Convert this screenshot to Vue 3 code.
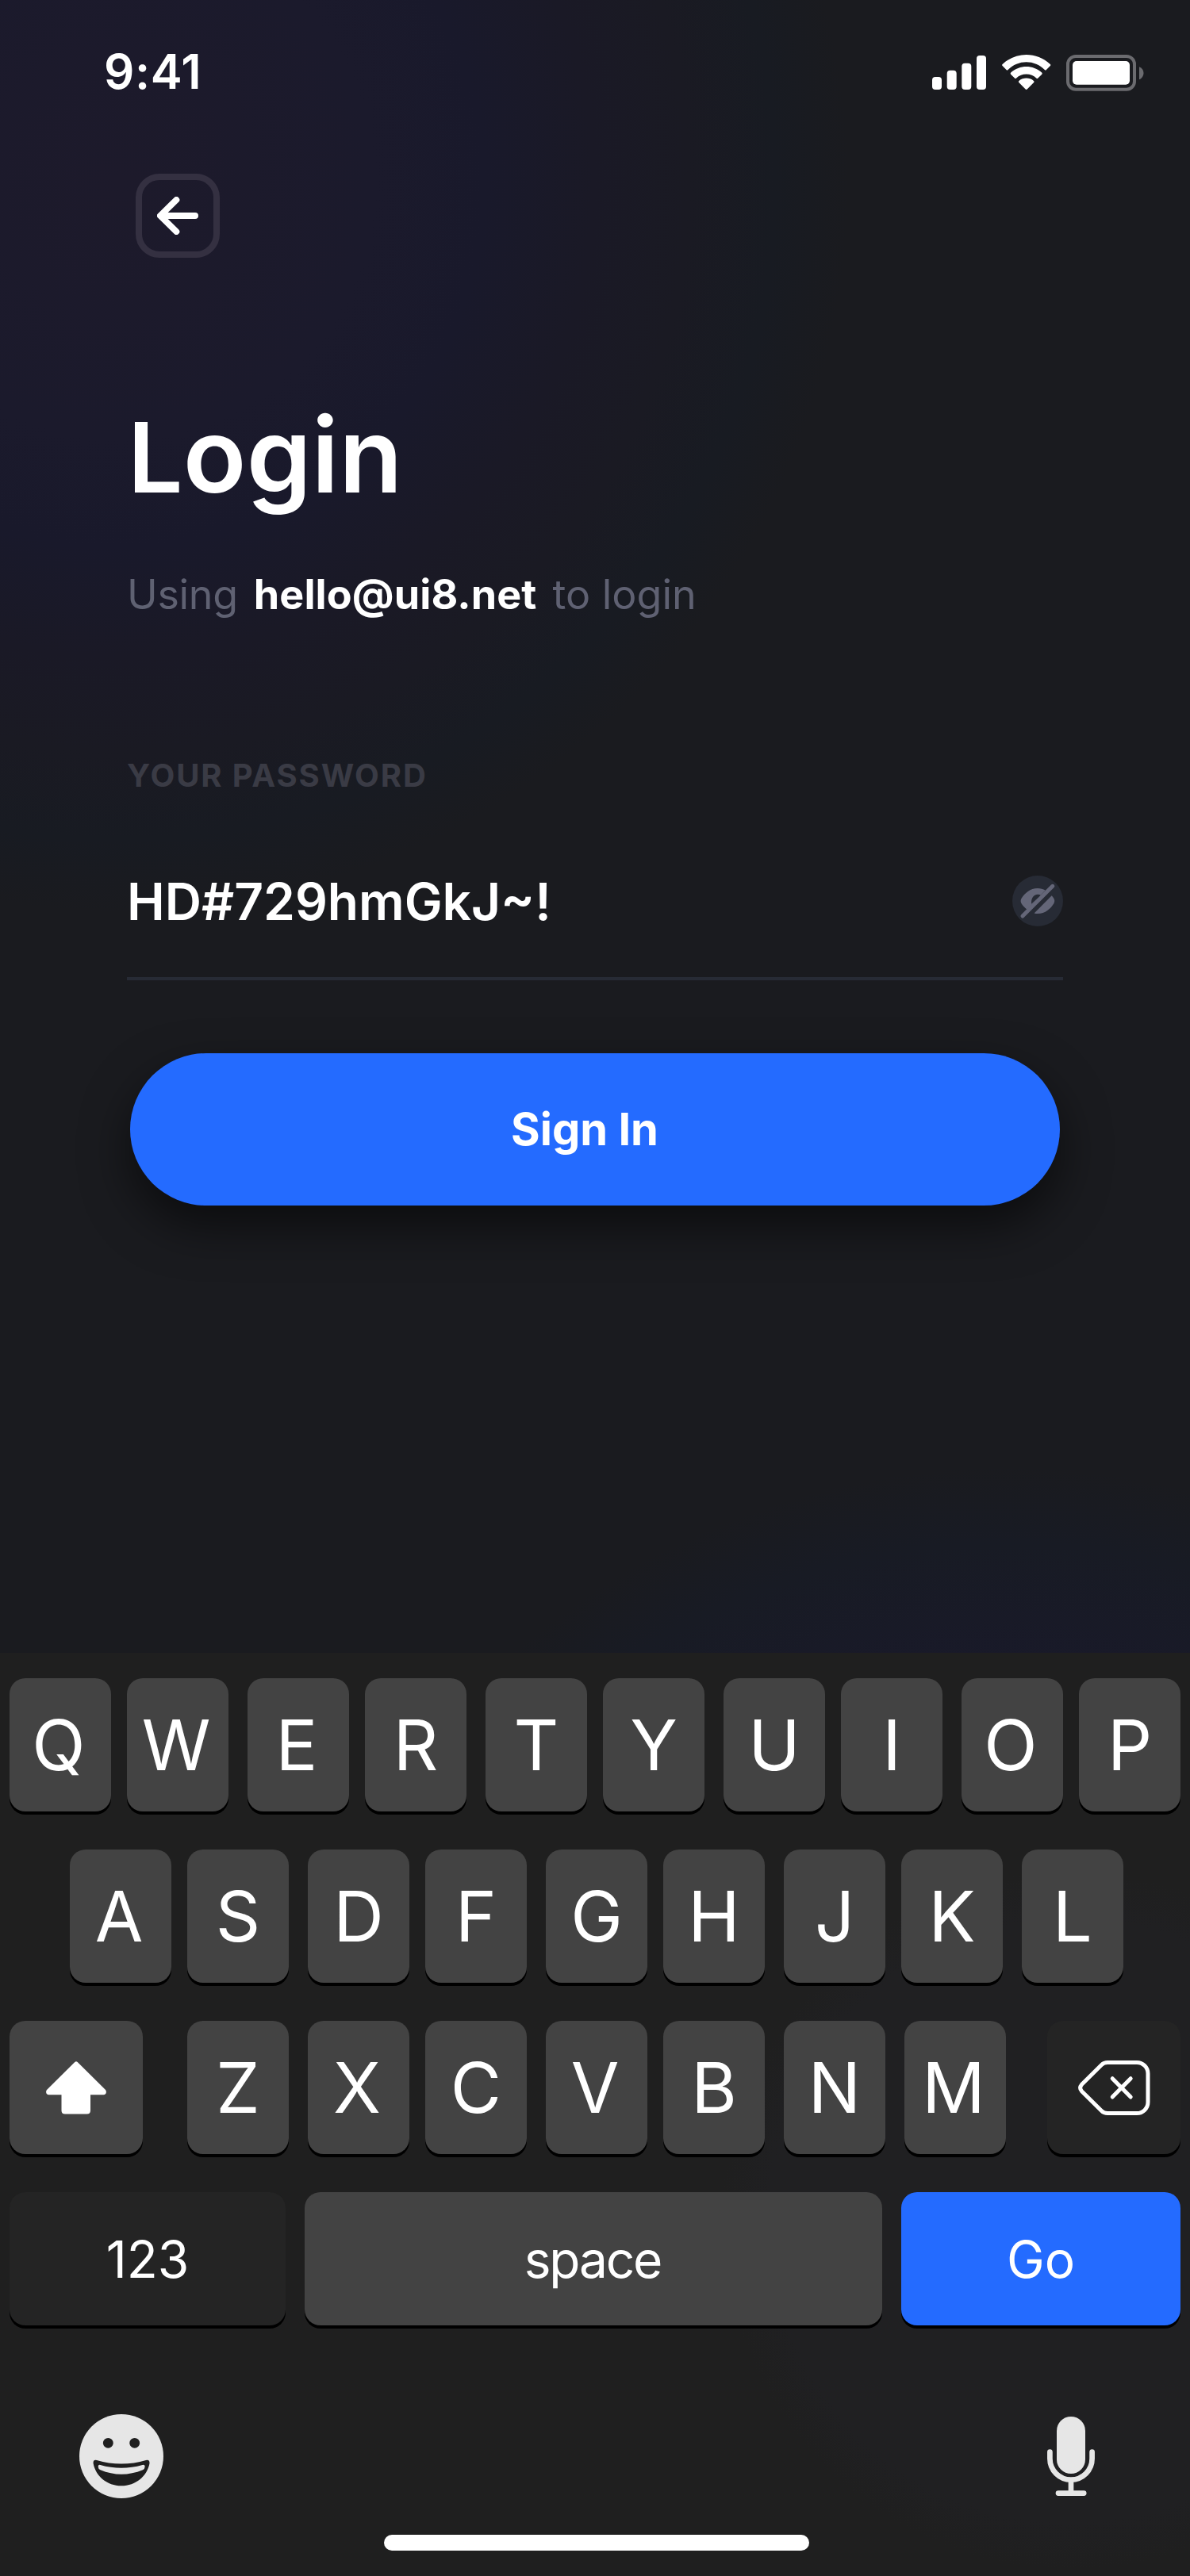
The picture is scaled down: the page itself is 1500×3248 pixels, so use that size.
<script setup>
import { ref } from 'vue'

const email = 'hello@ui8.net'
const password = ref('HD#729hmGkJ~!')

// g: gap before the key, s: glyph sits slightly left of centre
const topRow = [
  { c: 'Q', g: 0, s: true }, { c: 'W', g: 20, s: true }, { c: 'E', g: 24, s: true }, { c: 'R', g: 20 },
  { c: 'T', g: 24 }, { c: 'Y', g: 20 }, { c: 'U', g: 24 }, { c: 'I', g: 20 },
  { c: 'O', g: 24, s: true }, { c: 'P', g: 20 },
]
const midRow = [
  { c: 'A', g: 0, s: true }, { c: 'S', g: 20 }, { c: 'D', g: 24 }, { c: 'F', g: 20 },
  { c: 'G', g: 24 }, { c: 'H', g: 20 }, { c: 'J', g: 24 }, { c: 'K', g: 20 }, { c: 'L', g: 24 },
]
const lowRow = [
  { c: 'Z', g: 0 }, { c: 'X', g: 24, s: true }, { c: 'C', g: 20 }, { c: 'V', g: 24, s: true },
  { c: 'B', g: 20 }, { c: 'N', g: 24 }, { c: 'M', g: 24, s: true },
]
const keyClass = (k) => ['key', 'letter', { near: k.g === 20, far: k.g === 24, snug: k.s }]
</script>

<template>
  <main class="screen">
    <header class="status">
      <span class="time">9:41</span>
      <div class="indicators">
        <svg class="signal" width="68" height="43" viewBox="0 0 68 43" fill="#fff">
          <rect x="0" y="27" width="12" height="16" rx="4" />
          <rect x="18.7" y="18.7" width="12" height="24.3" rx="4" />
          <rect x="37.3" y="9.7" width="12" height="33.3" rx="4" />
          <rect x="56" y="0" width="12" height="43" rx="4" />
        </svg>
        <svg class="wifi" width="62" height="45" viewBox="0 0 62 45" fill="#fff">
          <path d="M30.7 9.3C39.3 9.3 47.4 12.6 53.8 18.9Q54.9 19.9 55.9 18.9L60.8 14.1Q61.8 13 60.8 12C44-4 17.400-4 .6 12Q-.4 13 .6 14.100L5.500 18.900Q6.500 19.900 7.600 18.900C14 12.600 22.100 9.300 30.700 9.300Z" />
          <path d="M30.700 24.500C35.500 24.500 39.900 26.300 43.300 29.500Q44.400 30.500 45.400 29.500L50.300 24.700Q51.300 23.600 50.200 22.500C39.200 12.400 22.200 12.400 11.200 22.500Q10.100 23.600 11.100 24.700L16 29.500Q17 30.500 18.100 29.500C21.500 26.300 25.900 24.500 30.700 24.500Z" />
          <path d="M40.100 34.900Q41.200 33.900 40 32.900C34.600 28.500 26.800 28.500 21.400 32.900Q20.200 33.900 21.300 34.900L29.700 43.500Q30.700 44.400 31.700 43.500Z" />
        </svg>
        <svg class="battery" width="98" height="46" viewBox="0 0 98 46">
          <rect x="2" y="2" width="84" height="41.700" rx="10" fill="none" stroke="#6b6b6f" stroke-width="4" />
          <rect x="8" y="8" width="72" height="29.700" rx="5" fill="#fff" />
          <path d="M92 15.300C95.300 16.700 97.500 19.500 97.500 23S95.300 29.900 92 31.300Z" fill="#6b6b6f" />
        </svg>
      </div>
    </header>

    <section class="login">
      <button class="back" aria-label="Back">
        <svg width="52" height="48" viewBox="0 0 52 48" fill="none" stroke="#fff" stroke-width="8" stroke-linecap="round" stroke-linejoin="round">
          <path d="M48 24H5M24.300 4L4 24L24.300 44" />
        </svg>
      </button>

      <h1>Login</h1>
      <p class="using"><span class="lead">Using</span><b>{{ email }}</b><span>to login</span></p>

      <label class="caption">YOUR PASSWORD</label>
      <div class="field">
        <span class="value">{{ password }}</span>
        <svg class="eye" width="64" height="64" viewBox="0 0 64 64">
          <circle cx="32" cy="32" r="32" fill="#272b35" />
          <path fill="#646678" fill-rule="evenodd" d="M41.700 18.500C38.800 17 35.500 16 32 16C22.500 16 15.500 22.500 11.700 28.500Q9.500 32 11.700 35.500C13.400 38.100 15.700 40.600 18.500 42.700ZM24.200 35.700C23.300 28.500 27 23.400 32.500 23.700Q34.500 23.900 36 24.700Z" />
          <path fill="#646678" d="M49.700 25.300Q51.300 27.200 52.300 28.800Q54.200 32 52.300 35.200C48.500 41.500 41.500 48 32 48Q29.800 48 27.600 47.500Z" />
          <path d="M50.800 13.300L13 51.100" stroke="#646678" stroke-width="5" stroke-linecap="round" />
        </svg>
      </div>

      <button class="submit">Sign In</button>
    </section>

    <section class="keyboard">
      <div class="row">
        <div v-for="k in topRow" :key="k.c" :class="keyClass(k)">{{ k.c }}</div>
      </div>
      <div class="row centred">
        <div v-for="k in midRow" :key="k.c" :class="keyClass(k)">{{ k.c }}</div>
      </div>
      <div class="row split">
        <div class="key side">
          <svg width="76" height="67" viewBox="0 0 76 67" fill="#fff">
            <path d="M36.300 .9Q38 -.6 39.700 .9L74.500 35.500C77.300 38.500 75.500 42.300 72.500 42.300H56V62Q56 66.500 51.500 66.500H24Q19.500 66.500 19.500 62V42.300H3.500C.5 42.300-1.300 38.500 1.500 35.500Z" />
          </svg>
        </div>
        <div class="cluster">
          <div v-for="k in lowRow" :key="k.c" :class="keyClass(k)">{{ k.c }}</div>
        </div>
        <div class="key side dark">
          <svg width="91" height="69" viewBox="0 0 91 69" fill="none" stroke="#fff" stroke-width="5" stroke-linecap="round" stroke-linejoin="round">
            <path d="M37 2.500H74A14 14 0 0 1 88 16.500V52.500A14 14 0 0 1 74 66.500H37Q32.500 66.500 29.500 63.500L4.500 38.700Q.8 34.500 4.500 30.300L29.500 5.500Q32.500 2.500 37 2.500Z" />
            <path d="M43.200 22.700L66.200 46M66.200 22.700L43.200 46" />
          </svg>
        </div>
      </div>
      <div class="row wide">
        <div class="key numbers dark">123</div>
        <div class="key space">space</div>
        <div class="key go">Go</div>
      </div>

      <div class="tools">
        <svg width="106" height="106" viewBox="0 0 106 106">
          <circle cx="53" cy="53" r="53" fill="#e6e6e6" />
          <g fill="#1f1f1f">
            <circle cx="36.300" cy="36.300" r="6.400" />
            <circle cx="69.700" cy="36.300" r="6.400" />
            <path d="M22 58C42 64 64 64 84 58Q88.800 57 88.500 62C85.500 78 71 90.300 53 90.300S20.500 78 17.600 62Q17.200 57 22 58Z" />
          </g>
          <path d="M26.500 64C44 69 62 69 79.500 64Q82.500 63.300 82.700 66Q82.500 69 80 70.200C62 77.500 44 77.500 26.500 70.200Q23.800 69 23.700 66Q23.900 63.300 26.500 64Z" fill="#e6e6e6" />
        </svg>
        <svg width="60" height="100" viewBox="0 0 60 100">
          <rect x="12" y="0" width="36" height="72" rx="18" fill="#e6e6e6" />
          <path d="M3.400 44.500V53A26.600 26.600 0 0 0 56.600 53V44.500M30 80V96.500M14 96.600H46.200" fill="none" stroke="#e6e6e6" stroke-width="6.700" stroke-linecap="round" />
        </svg>
      </div>
      <div class="home"></div>
    </section>
  </main>
</template>

<style>
body {
  margin: 0;
  background: #1a1b1f;
}
</style>

<style scoped>
.screen {
  display: flex;
  flex-direction: column;
  box-sizing: border-box;
  width: 1500px;
  height: 3248px;
  overflow: hidden;
  color: #fff;
  font-family: Inter, "Liberation Sans", sans-serif;
  background:
    radial-gradient(circle 920px at 150px 230px, #1d1a2b 0, #1b1a2c 35%, #19192b 50%, #1a1926 65%, #1a1a23 78%, #181b22 90%, rgba(26, 27, 31, 0) 100%),
    radial-gradient(circle 950px at 1270px 2800px, #1b1a2c 0, #19192a 70%, #181b24 90%, rgba(26, 27, 31, 0) 100%),
    #1a1b1f;
}

button {
  padding: 0;
  border: 0;
  color: inherit;
  font: inherit;
  background: none;
}

svg {
  display: block;
  flex: none;
}

.status {
  display: flex;
  justify-content: space-between;
  align-items: flex-start;
  height: 219px;
  padding: 0 58px 0 131px;
  box-sizing: border-box;
}

.time {
  margin-top: 54px;
  font-size: 60px;
  font-weight: 600;
  line-height: 72px;
  letter-spacing: 0.6px;
}

.indicators {
  display: flex;
  margin-top: 69px;
}

.signal {
  margin-top: 1px;
}

.wifi {
  margin-left: 20px;
}

.battery {
  margin-left: 19px;
}

.login {
  display: flex;
  flex-direction: column;
  height: 1865px;
  padding: 0 160px;
}

.back {
  display: flex;
  align-items: center;
  justify-content: center;
  box-sizing: border-box;
  width: 106px;
  height: 106px;
  margin-left: 11px;
  border: 8px solid #343041;
  border-radius: 30px;
}

h1 {
  height: 156px;
  margin: 171px 0 0 1px;
  font-size: 131px;
  font-weight: 600;
  line-height: 155px;
  letter-spacing: 0.2px;
}

h1::first-letter {
  font-size: 123px;
}

.using {
  display: flex;
  gap: 20px;
  margin: 66px 0 0;
  color: #5f6172;
  font-size: 52px;
  line-height: 64px;
  white-space: nowrap;
}

.lead {
  letter-spacing: -0.3px;
}

.using b {
  color: #fff;
  font-weight: 700;
  letter-spacing: 0.1px;
}

.caption {
  margin-top: 172px;
  color: #3a3b45;
  font-size: 40px;
  font-weight: 700;
  line-height: 48px;
  letter-spacing: 1.9px;
}

.field {
  display: flex;
  justify-content: space-between;
  align-items: center;
  box-sizing: border-box;
  height: 200px;
  margin-top: 34px;
  border-bottom: 4px solid #272b35;
}

.value {
  margin-top: 5px;
  font-size: 64px;
  font-weight: 600;
  line-height: 80px;
}

.eye {
  margin-top: 4px;
}

.submit {
  height: 192px;
  margin: 92px 4px 0;
  padding-right: 26px;
  border-radius: 96px;
  background: #246bff;
  font-size: 56px;
  font-weight: 700;
  box-shadow: 0 26px 60px rgba(0, 0, 0, 0.54);
}

.keyboard {
  display: flex;
  flex-direction: column;
  box-sizing: border-box;
  height: 1164px;
  padding: 32px 12px 0;
  background: radial-gradient(circle at 1350px 716px, #202022 380px, #1f1f1f 440px);
}

.row {
  display: flex;
  margin-bottom: 48px;
}

.centred {
  justify-content: center;
  padding-left: 4px;
}

.split,
.wide {
  justify-content: space-between;
}

.cluster {
  display: flex;
  margin-right: -4px;
}

.key {
  display: flex;
  align-items: center;
  justify-content: center;
  box-sizing: border-box;
  height: 168px;
  border-radius: 20px;
  background: #434343;
  box-shadow: 0 4px 0 #000;
  font-size: 64px;
}

.letter {
  width: 128px;
  font-size: 88px;
}

.near {
  margin-left: 20px;
}

.far {
  margin-left: 24px;
}

.snug {
  padding-right: 4px;
}

.side {
  width: 168px;
}

.dark {
  background: #242424;
}

.numbers {
  width: 348px;
}

.space {
  width: 728px;
  padding-right: 2px;
  letter-spacing: -2.2px;
}

.go {
  width: 352px;
  background: #246bff;
}

.tools {
  display: flex;
  align-items: center;
  justify-content: space-between;
  height: 106px;
  margin-top: 64px;
  padding: 0 108px 0 88px;
}

.home {
  width: 536px;
  height: 20px;
  margin: 46px 0 0 472px;
  border-radius: 10px;
  background: #fff;
}
</style>
